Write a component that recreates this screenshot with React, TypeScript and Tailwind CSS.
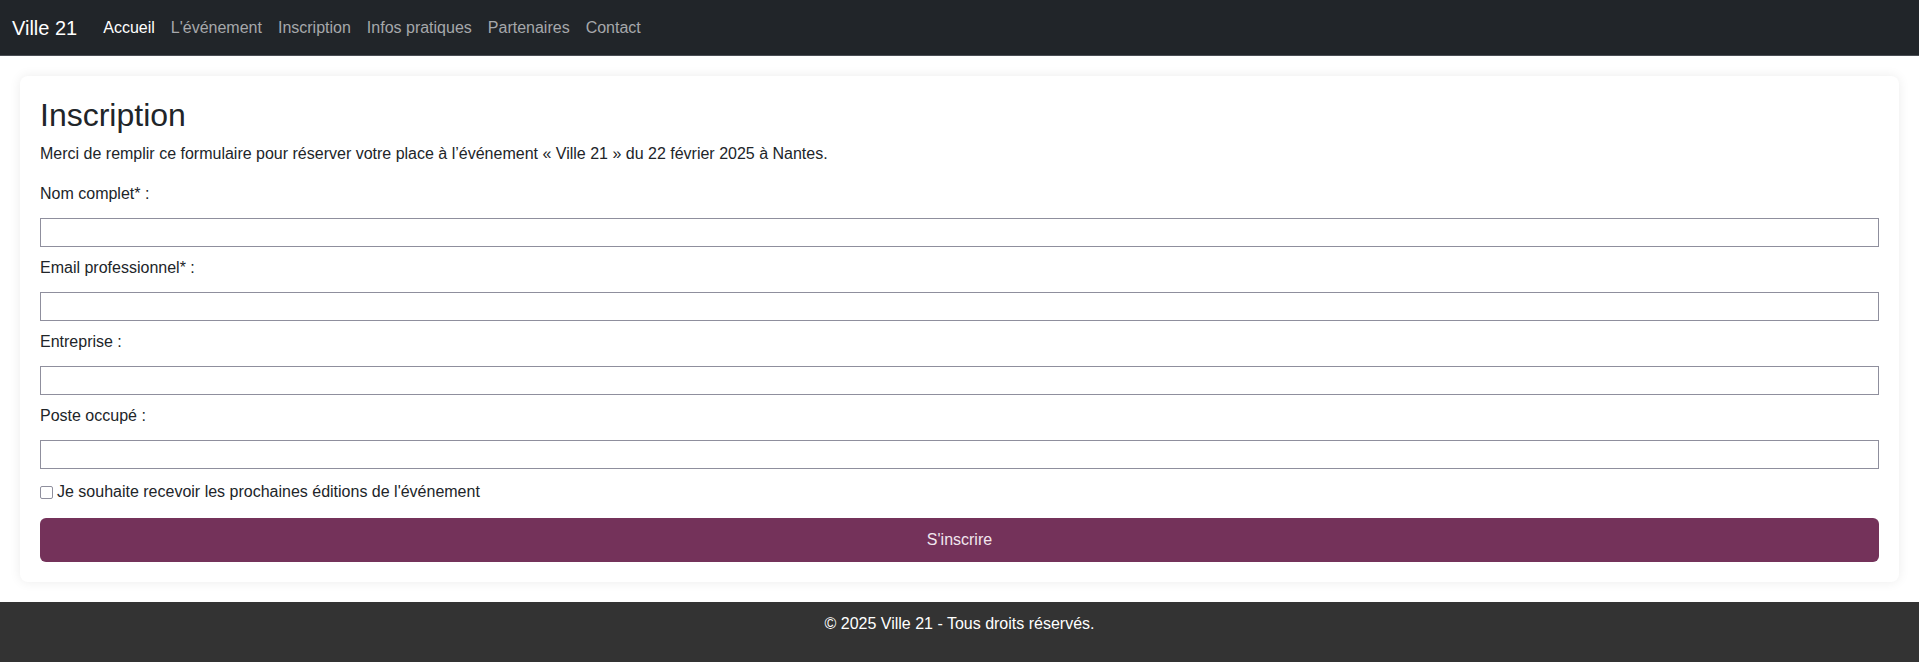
const links = [
  { label: "Accueil", active: true },
  { label: "L'événement" },
  { label: "Inscription" },
  { label: "Infos pratiques" },
  { label: "Partenaires" },
  { label: "Contact" },
];

const fields = ["Nom complet* :", "Email professionnel* :", "Entreprise :", "Poste occupé :"];

const Field = ({ label }: { label: string }) => (
  <div className="flex flex-col">
    <label className="block leading-6 mb-3">{label}</label>
    <input type="text" className="h-[29px] w-full border border-[#8f8f9d] bg-white px-1 outline-none" />
  </div>
);

export default function App() {
  return (
    <div className="min-h-screen bg-white text-base text-[#212529] font-['Liberation_Sans',Arial,sans-serif]">
      <nav className="h-14 bg-[#212529] border-b border-[#4a4e54] flex items-center px-3">
        <span className="text-xl text-white mr-[18px]">Ville 21</span>
        <ul className="flex items-center">
          {links.map((l) => (
            <li key={l.label}>
              <a className={`px-2 ${l.active ? "text-white" : "text-[#a6a8ab]"}`}>{l.label}</a>
            </li>
          ))}
        </ul>
      </nav>

      <main className="p-5">
        <div className="bg-white rounded-lg shadow-[0_0_12px_rgba(0,0,0,0.08)] p-5">
          <h2 className="text-[32px] leading-[38px] mb-2">Inscription</h2>
          <p className="leading-6 mb-4">
            Merci de remplir ce formulaire pour réserver votre place à l’événement « Ville 21 » du 22 février 2025 à Nantes.
          </p>
          <form className="flex flex-col gap-[9px]">
            {fields.map((f) => (
              <Field key={f} label={f} />
            ))}
            <label className="mt-[2px] flex items-center leading-6">
              <span className="w-[13px] h-[13px] border border-[#8f8f9d] rounded-[2px] bg-white mr-[4px]" />
              Je souhaite recevoir les prochaines éditions de l'événement
            </label>
            <button
              type="button"
              className="mt-[5px] h-11 w-full rounded-md bg-[#74325a] text-[#f1e6ee] leading-6"
            >
              S'inscrire
            </button>
          </form>
        </div>
      </main>

      <footer className="bg-[#333333] text-white text-center pt-[10px] pb-[26px]">
        <p className="leading-6">© 2025 Ville 21 - Tous droits réservés.</p>
      </footer>
    </div>
  );
}
